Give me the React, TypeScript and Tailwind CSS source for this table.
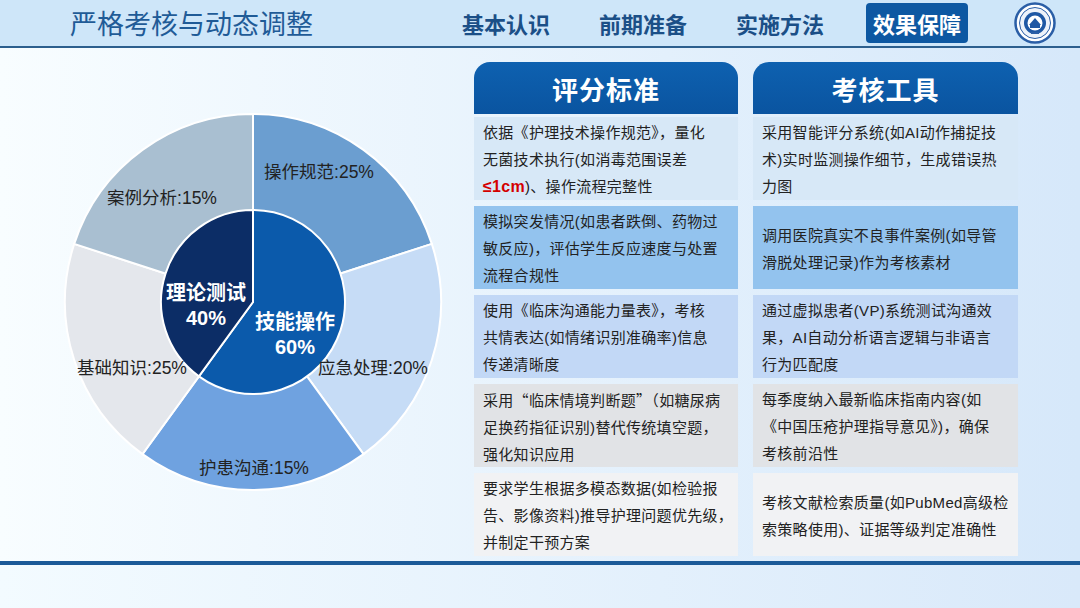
import React from "react";

const FONT = '"Liberation Sans", "Noto Sans CJK SC", sans-serif';
const CJK = '"Noto Sans CJK SC", "Liberation Sans", sans-serif';

const cx = 253;
const cy = 302;
const R = 188;
const r = 92;

function pt(deg: number, rad: number): [number, number] {
  const a = (deg * Math.PI) / 180;
  return [cx + rad * Math.sin(a), cy - rad * Math.cos(a)];
}

function wedge(a0: number, a1: number, rad: number) {
  const [x0, y0] = pt(a0, rad);
  const [x1, y1] = pt(a1, rad);
  const large = a1 - a0 > 180 ? 1 : 0;
  return `M ${cx} ${cy} L ${x0} ${y0} A ${rad} ${rad} 0 ${large} 1 ${x1} ${y1} Z`;
}

const outer: [number, number, string][] = [
  [0, 72, "#6b9ed0"],
  [72, 144, "#c6dcf6"],
  [144, 216, "#6fa2e0"],
  [216, 288, "#e4e7ec"],
  [288, 360, "#a9bfd1"],
];
const inner: [number, number, string][] = [
  [0, 216, "#0b5aab"],
  [216, 360, "#0c2d66"],
];

const labels: [string, number, number][] = [
  ["操作规范:25%", 319, 172],
  ["案例分析:15%", 162, 198],
  ["基础知识:25%", 132, 368],
  ["应急处理:20%", 373, 368],
  ["护患沟通:15%", 254, 468],
];

function Pie() {
  return (
    <svg width="474" height="513" viewBox="0 48 474 513">
      {outer.map(([a0, a1, c], i) => (
        <path key={"o" + i} d={wedge(a0, a1, R)} fill={c} stroke="#ffffff" strokeWidth="2" />
      ))}
      {inner.map(([a0, a1, c], i) => (
        <path key={"i" + i} d={wedge(a0, a1, r)} fill={c} stroke="#ffffff" strokeWidth="2" />
      ))}
      {labels.map(([t, x, y]) => (
        <text
          key={t}
          x={x}
          y={y}
          textAnchor="middle"
          dominantBaseline="central"
          fontSize="17.5"
          fill="#222222"
          style={{ fontFamily: FONT }}
        >
          {t}
        </text>
      ))}
      <g fill="#ffffff" fontWeight="700" fontSize="20" style={{ fontFamily: FONT }} textAnchor="middle" dominantBaseline="central">
        <text x="206" y="293">理论测试</text>
        <text x="206" y="318">40%</text>
        <text x="295" y="322">技能操作</text>
        <text x="295" y="347">60%</text>
      </g>
    </svg>
  );
}

function Logo() {
  return (
    <svg width="42" height="42" viewBox="0 0 42 42">
      <circle cx="21" cy="21" r="19.5" fill="#ffffff" stroke="#2a5ea6" strokeWidth="2.5" />
      <circle cx="21" cy="21" r="15.5" fill="#eef3fa" stroke="#2a5ea6" strokeWidth="1" />
      <circle cx="21" cy="21" r="11" fill="#1f58a4" />
      <circle cx="21" cy="21" r="7.5" fill="#ffffff" />
      <path d="M15 23 L21 16 L27 23 Z" fill="#1f58a4" />
      <rect x="16" y="23" width="10" height="3" fill="#1f58a4" />
      <rect x="17" y="30" width="8" height="2" fill="#2a5ea6" />
    </svg>
  );
}

const rowBgs = ["bg-[#d7e8f7]", "bg-[#93c3ee]", "bg-[#c2d8f6]", "bg-[#e1e3e6]", "bg-[#f1f2f4]"];

const Q = ({ c }: { c: string }) => <span style={{ fontFamily: CJK }}>{c}</span>;

const leftRows: React.ReactNode[][] = [
  [
    "依据《护理技术操作规范》，量化",
    "无菌技术执行(如消毒范围误差",
    <>
      <span className="text-[#d40000] font-bold text-[16px]">≤1cm</span>)、操作流程完整性
    </>,
  ],
  ["模拟突发情况(如患者跌倒、药物过", "敏反应)，评估学生反应速度与处置", "流程合规性"],
  ["使用《临床沟通能力量表》，考核", "共情表达(如情绪识别准确率)信息", "传递清晰度"],
  [
    <>
      采用<Q c="“" />临床情境判断题<Q c="”" />（如糖尿病
    </>,
    "足换药指征识别)替代传统填空题，",
    "强化知识应用",
  ],
  ["要求学生根据多模态数据(如检验报", "告、影像资料)推导护理问题优先级，", "并制定干预方案"],
];

const rightRows: React.ReactNode[][] = [
  ["采用智能评分系统(如AI动作捕捉技", "术)实时监测操作细节，生成错误热", "力图"],
  ["调用医院真实不良事件案例(如导管", "滑脱处理记录)作为考核素材"],
  ["通过虚拟患者(VP)系统测试沟通效", "果，AI自动分析语言逻辑与非语言", "行为匹配度"],
  ["每季度纳入最新临床指南内容(如", "《中国压疮护理指导意见》)，确保", "考核前沿性"],
  ["考核文献检索质量(如PubMed高级检", "索策略使用)、证据等级判定准确性"],
];

function Card({ title, rows, w }: { title: string; rows: React.ReactNode[][]; w: string }) {
  return (
    <div className={`${w} flex flex-col`}>
      <div className="h-[52px] rounded-t-[16px] bg-gradient-to-b from-[#0e61b0] to-[#0a54a0] flex items-center justify-center">
        <span className="text-white text-[26px] font-bold tracking-[1px]" style={{ fontFamily: CJK }}>
          {title}
        </span>
      </div>
      <div className="mt-[3px] flex flex-col gap-[6px]">
        {rows.map((lines, i) => (
          <div key={i} className={`h-[83px] ${rowBgs[i]} flex flex-col justify-center pl-[9px] pt-[2px]`}>
            {lines.map((l, j) => (
              <div key={j} className="whitespace-nowrap text-[15px] tracking-[0.3px] leading-[27px] text-[#222222]">
                {l}
              </div>
            ))}
          </div>
        ))}
      </div>
    </div>
  );
}

const navs = ["基本认识", "前期准备", "实施方法", "效果保障"];

export default function App() {
  return (
    <div className="w-[1080px] h-[608px] overflow-hidden flex flex-col bg-gradient-to-r from-[#f8fdff] to-[#d6e8fa]" style={{ fontFamily: FONT }}>
      <div className="h-[48px] shrink-0 bg-[#cee6f9] border-b-[2px] border-[#2c5f8e] flex items-center">
        <div className="w-[455px] pl-[70px]">
          <span className="text-[27px] text-[#1f5b97]" style={{ fontFamily: CJK }}>
            严格考核与动态调整
          </span>
        </div>
        <div className="flex gap-[35px]">
          {navs.map((n, i) => (
            <div
              key={n}
              className={`w-[102px] h-[40px] flex items-center justify-center rounded-[4px] text-[22px] font-bold ${
                i === 3 ? "bg-[#0d58a2] text-white" : "text-[#1b4f87]"
              }`}
              style={{ fontFamily: CJK }}
            >
              {n}
            </div>
          ))}
        </div>
        <div className="ml-[46px] flex items-center">
          <Logo />
        </div>
      </div>
      <div className="h-[513px] shrink-0 flex">
        <div className="w-[474px] shrink-0">
          <Pie />
        </div>
        <div className="pt-[14px] flex gap-[15px]">
          <Card title="评分标准" rows={leftRows} w="w-[264px]" />
          <Card title="考核工具" rows={rightRows} w="w-[265px]" />
        </div>
      </div>
      <div className="h-[4px] shrink-0 bg-[#1b5a98]" />
      <div className="flex-1 bg-gradient-to-r from-[#f3fbff] to-[#d9e9fa]" />
    </div>
  );
}
